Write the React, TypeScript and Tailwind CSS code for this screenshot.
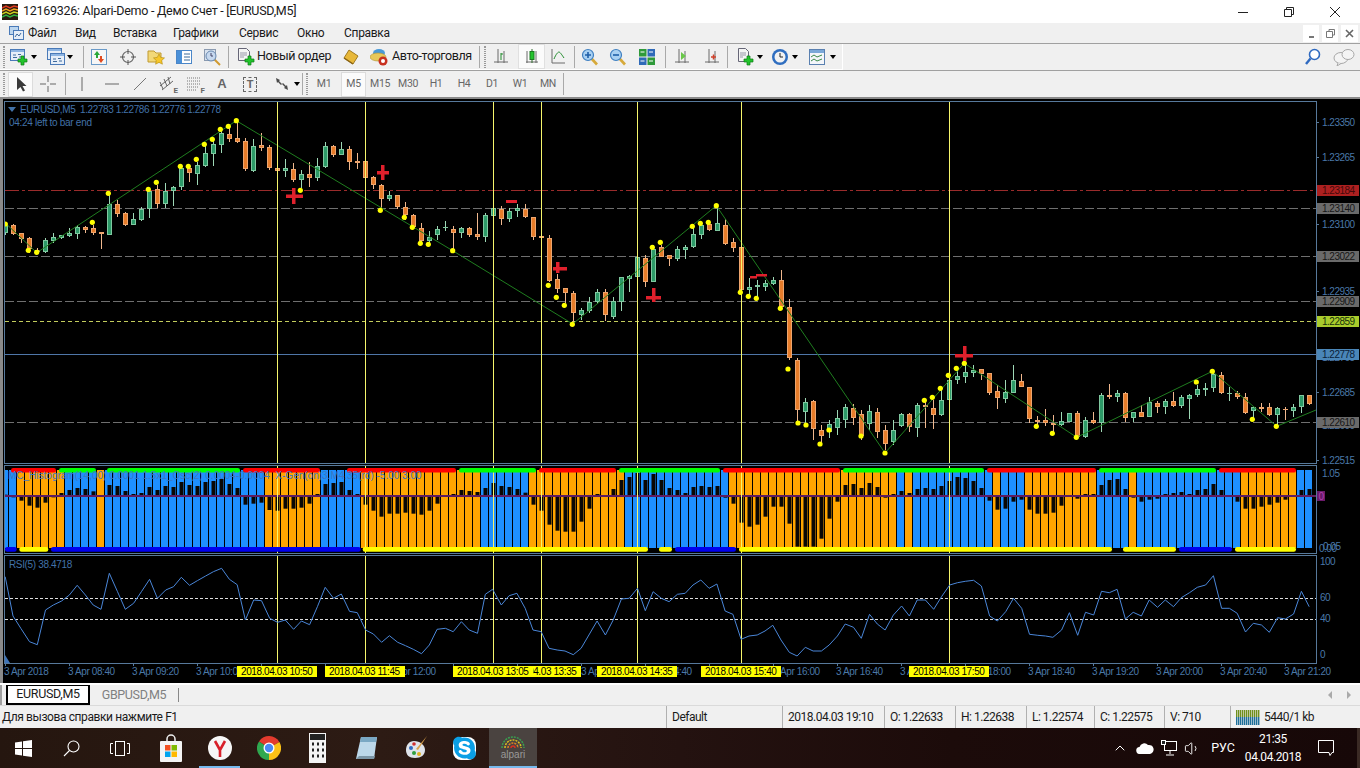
import React from "react";
import { ChevronUp, Volume1 } from "lucide-react";
import { FaSkype } from "react-icons/fa";

type Pt = [number, number];

// ---------- chart data, read off the picture (values are in 3x crop coordinates) ----------
const scale3 = (pts: Pt[], ox: number, oy: number): Pt[] => pts.map(([x, y]) => [ox + x / 3, oy + y / 3]);
const parsePairs = (s: string) => s.trim().split(/\s+/).map((p) => p.split(",").map(Number) as Pt);

const candlesA = [
  [372,375,400,405,1],[372,376,402,404,0],[398,400,416,430,0],[412,414,446,458,0],[445,450,455,462,0],[415,420,456,460,1],
  [400,412,424,428,1],[404,406,414,416,1],[385,398,408,410,1],[376,380,402,418,1],[378,382,390,398,0],[375,384,400,405,0],
  [397,397,402,446,0],[285,312,404,404,1],[300,312,342,352,0],[335,340,375,378,0],[340,358,374,375,1],[320,327,360,362,1],
  [265,272,328,355,1],[255,268,312,325,0],[250,274,312,325,1],[258,260,274,318,1],[200,205,262,270,1],[198,205,218,246,0],
  [185,196,222,255,1],[130,160,198,202,1],[120,133,162,198,1],[90,100,134,158,1],[80,103,116,125,0],[65,115,126,128,0],
  [115,124,208,212,0],[118,138,212,215,1],[98,135,144,152,0],[135,140,204,210,0],[203,203,212,212,0],[178,205,212,230,1],
  [188,208,240,246,0],[210,223,240,265,1],[185,223,234,262,0],[175,199,234,242,1],[127,139,202,205,1],[135,139,164,172,0],
  [127,148,164,166,1],[138,148,185,210,0],[160,184,188,208,0],[183,184,233,235,0],[228,232,254,266,0],[252,254,296,325,0],
  [274,286,298,304,1],[284,286,320,328,0],[305,320,346,360,0],[342,346,382,386,0],[370,385,422,430,0],[392,412,422,428,1],
  [378,388,406,420,1],[363,380,381,392,1],
  // k56..98
  [378,388,398,450,0],[382,385,398,414,1],[380,384,404,410,0],[340,403,410,420,0],[338,346,410,425,1],[322,325,347,349,1],
  [318,326,356,375,0],[325,334,356,365,1],[312,325,334,350,1],[312,326,352,354,0],[350,352,410,420,0],[409,409,415,416,0],
  [406,415,542,545,0],[523,538,566,580,0],[565,565,580,610,0],[574,580,640,665,0],[625,630,644,660,1],[590,606,632,640,1],
  [568,576,606,612,1],[568,576,646,662,0],[592,604,650,658,1],[530,532,606,632,1],[525,529,536,575,1],[470,472,530,532,1],
  [466,474,545,562,0],[436,446,545,546,1],[436,442,470,472,0],[466,466,478,498,0],[438,447,476,482,1],[436,442,450,476,1],
  [382,403,442,444,1],[368,375,406,416,1],[362,373,390,392,0],[320,369,392,392,1],[358,374,432,434,0],[415,427,443,456,0],
  [440,441,570,572,0],[535,562,569,590,1],[540,556,558,592,1],[540,550,560,572,1],[530,541,551,556,1],[510,541,620,622,0],
  [598,622,774,780,0],
];
// k99..111 in page pixels
const candlesGap = [
  [358,360,410,422,0],[398,402,412,425,1],[400,401,429,440,0],[425,430,436,445,0],[420,424,432,438,1],[410,418,428,435,1],
  [404,407,420,428,1],[404,408,418,425,0],[410,414,436,440,0],[405,411,424,430,1],[408,412,432,438,0],[425,430,444,450,0],
  [420,430,442,445,1],
];
// k112..163
const candlesB = [
  [730,733,768,770,1],[728,733,772,785,0],[700,706,775,802,1],[695,706,710,775,0],[690,715,734,776,0],[655,691,735,738,1],
  [628,630,690,692,1],[600,618,630,642,1],[582,607,622,638,1],[585,600,608,620,1],[596,598,612,630,0],[608,610,668,675,0],
  [645,664,684,716,0],[630,666,686,698,1],[585,630,668,670,1],[612,633,650,652,0],[650,652,746,760,0],[738,750,756,768,0],
  [716,750,760,768,0],[735,759,764,790,0],[726,754,764,768,1],[728,730,756,756,1],[722,729,800,802,0],[742,750,802,804,1],
  [726,750,758,762,0],[668,676,760,785,1],[642,676,680,688,0],[660,670,680,696,1],[666,669,745,755,0],[725,727,745,755,1],
  [706,727,740,742,0],[682,697,740,742,1],[694,698,712,730,0],[686,694,710,732,1],[666,694,708,712,0],[675,681,708,714,1],
  [672,676,686,746,1],[645,658,676,680,1],[640,653,660,678,1],[600,612,654,665,1],[605,616,668,672,0],[650,668,669,692,1],
  [664,668,680,686,0],[670,680,730,732,0],[708,712,724,744,1],[698,711,714,726,0],[700,712,735,738,0],[712,715,734,770,1],
  [712,716,720,750,0],[702,711,722,742,1],[675,676,712,730,1],[674,676,702,704,0],
];
const candles = [
  ...candlesA.map((r) => [100 + r[0] / 3, 100 + r[1] / 3, 100 + r[2] / 3, 100 + r[3] / 3, r[4]]),
  ...candlesGap,
  ...candlesB.map((r) => [170 + r[0] / 3, 170 + r[1] / 3, 170 + r[2] / 3, 170 + r[3] / 3, r[4]]),
];

const dots: Pt[] = [
  ...scale3([[16,372],[85,451],[110,457],[325,280],[277,367],[445,268],[469,247],[541,199],[565,199],[589,178],[613,133],[637,118],[661,88],[685,79],[709,62],[901,271],[1141,331],[1213,352],[1237,382],[1261,430],[1285,433]], 0, 100),
  ...scale3([[8,452],[295,556],[319,592],[343,616],[367,673],[607,442],[631,427],[727,379],[751,370],[775,367],[799,317],[871,577],[895,589],[919,595],[991,625]], 450, 100),
  [788,369],[798,423],[806,425],[820,444],[829,430],[861,436],[885,453],
  ...scale3([[73,691],[97,682],[121,655],[145,616],[169,595],[193,580],[409,769],[457,790],[529,802],[889,636],[937,604],[1057,748],[1129,769]], 900, 170),
];

const zigzag = "5.3,223 36.7,252.7 236.3,120.7 452.7,250.7 572.7,324 716.3,205.7 885,453 964.3,363.3 1076.7,437.3 1212.3,371.3 1276.7,426.3 1316,410";
const yellowLines = [277, 365, 493, 541, 637, 741, 949];

// [x, y, width, height] of the red marks
const redMarks = [
  [286,194.5,17,3.5],[292,188,3.5,16],[377,171,12,3.5],[381,165,3.5,15],[506,200,11,3],[553,267,14,3.5],[556,262,3.5,11],
  [646,296,15,3.5],[652,288,3.5,14],[750,276,7,2.5],[756,274,11,2.5],[955,354,18,3.5],[963,346,3.5,15],
];

const histA = [104,112,122,137,143,128,112,99,90,84,87,94,107,75,78,93,102,99,81,90,78,81,66,75,78,66,63,57,72,84,134,131,128,150,152,146,146,143,131,102,72,69,66,90,102,134,152,170,161,161,158,161,164,152,131,107];
const histB = [102,90,93,96,84,69,78,81,87,98,134,152,194,212,215,215,185,146,102,107,87,60,51,39,60,42,60,84,90,99,81,78,81,78,113,131,188,200,194,170,140,140,191,260,260,260,236,176,125,75,72,84,69,81,113,102];
const histC = [93,99,87,84,87,78,63,51,54,63,84,122,149,146,125,119,149,161,161,158,137,107,116,102,102,75,60,57,87,113,125,119,116,102,99,96,102,90,87,72,90,107,125,146,146,140,134,128,119,107,90,87];
const histValues = [...histA, ...histB, ...histC];

// colour runs of the histogram background: [first bar, last bar]
const orangeRuns = [[2,7],[12,12],[33,39],[45,59],[66,77],[91,111],[113,113],[124,124],[128,136],[141,141],[155,161]];
const isOrange = (k: number) => orangeRuns.some(([a, b]) => k >= a && k <= b);

const topBars: [number, number, string][] = [
  [11,56,"#ff0000"],[59,96,"#00ff00"],[107,240,"#00ff00"],[243,320,"#ff0000"],[347,456,"#ff0000"],[459,536,"#00ff00"],[539,616,"#ff0000"],
  [619,720,"#00ff00"],[723,840,"#ff0000"],[843,984,"#00ff00"],[987,1096,"#ff0000"],[1099,1216,"#00ff00"],[1219,1296,"#ff0000"],
];
const bottomBars: [number, number, string][] = [
  [5,16.7,"#0000ee"],[19.3,48.3,"#ffff00"],[51,360.7,"#0000ee"],[362.7,648,"#ffff00"],[659,672,"#ffff00"],[675,736,"#0000ee"],
  [739,1112,"#ffff00"],[1123,1176,"#ffff00"],[1179,1232,"#0000ee"],[1235,1296,"#ffff00"],
];

const rsiLeft = parsePairs(`12,80 30,198 48,235 68,275 86,284 105,180 123,165 142,153 160,135 178,106 197,135 215,165 233,178 252,70 271,125 289,178 308,160 326,125 345,88 363,145 382,120 400,110 418,82 437,106 455,92 474,78 492,65 511,55 529,88 547,104 566,210 585,150 603,152 622,205 640,217 658,210 677,238 695,213 714,224 732,170 750,112 769,145 787,132 806,184 824,188 843,240 861,252 880,277 898,257 917,277 935,287 953,298 972,311 990,285 1008,238 1027,235 1045,245 1064,215 1082,240 1101,250 1119,133 1136,118 1156,165 1174,137 1192,130 1211,175 1229,240 1248,245 1266,295 1285,300 1303,303 1322,314 1340,295 1358,255 1377,213 1396,255 1414,210 1433,147 1451,145 1470,115 1488,182 1506,125 1525,145 1543,155 1562,133`);
const rsiRight = parsePairs(`12,130 30,105 48,90 67,115 85,102 104,183 122,193 141,268 159,258 178,255 196,243 214,226 233,270 252,307 270,318 289,292 307,303 326,303 344,285 363,258 381,222 400,232 418,265 437,193 455,222 473,240 492,195 511,168 529,198 547,150 566,150 585,178 603,140 622,105 640,98 658,94 677,91 695,108 714,198 732,213 751,185 769,145 788,175 806,253 825,256 843,258 860,262 880,240 898,188 917,256 935,187 954,195 972,124 990,128 1008,118 1027,207 1045,187 1064,198 1082,150 1101,172 1119,150 1138,170 1156,143 1175,128 1193,112 1212,105 1230,77 1249,175 1267,175 1285,190 1304,246 1322,220 1341,225 1359,247 1378,203 1396,207 1415,192 1433,124 1451,170`);
const rsiLine = [
  ...rsiLeft.map(([x, y]) => `${(x / 2.306).toFixed(1)},${(550 + y / 3).toFixed(1)}`),
  ...rsiRight.map(([x, y]) => `${(680 + x / 2.306).toFixed(1)},${(550 + y / 3).toFixed(1)}`),
].join(" ");

const barX = (k: number) => 5 + 8 * k;

// ---------- chart panes ----------
function YellowLines({ y1, y2 }: { y1: number; y2: number }) {
  return (
    <>
      {yellowLines.map((x) => (
        <line key={x} x1={x + 0.5} x2={x + 0.5} y1={y1} y2={y2} stroke="#f6f56c" strokeWidth="1" />
      ))}
    </>
  );
}

function PricePlot() {
  return (
    <svg className="block h-[361px] w-[1311px]" viewBox="5 102 1311 361">
      <line x1="5" x2="1316" y1="190.5" y2="190.5" stroke="#9a2b2b" strokeDasharray="14 3 3 3" />
      <line x1="5" x2="1316" y1="208.5" y2="208.5" stroke="#6f6f6f" strokeDasharray="9 3" />
      <line x1="5" x2="1316" y1="256.5" y2="256.5" stroke="#6f6f6f" strokeDasharray="9 3" />
      <line x1="5" x2="1316" y1="301.5" y2="301.5" stroke="#6f6f6f" strokeDasharray="9 3" />
      <line x1="5" x2="1316" y1="321.5" y2="321.5" stroke="#c2cc5c" strokeDasharray="4 3" />
      <line x1="5" x2="1316" y1="354.5" y2="354.5" stroke="#4f76a8" />
      <line x1="5" x2="1316" y1="422.5" y2="422.5" stroke="#6f6f6f" strokeDasharray="9 3" />
      {candles.map((c, k) => {
        const green = c[4] === 1;
        const x = barX(k);
        return (
          <g key={k} shapeRendering="crispEdges">
            <rect x={x} y={c[0]} width="1" height={Math.max(c[3] - c[0], 1)} fill={green ? "#9ed8b6" : "#f0b88e"} />
            <rect
              x={x - 1.5}
              y={c[1] + 0.5}
              width="4"
              height={Math.max(c[2] - c[1] - 1, 0.5)}
              fill={green ? "#2d9a68" : "#e67c2a"}
              stroke={green ? "#80c8a0" : "#eda56e"}
              strokeWidth="1"
            />
          </g>
        );
      })}
      <polyline points={zigzag} fill="none" stroke="#1f7d1f" strokeWidth="1" />
      <YellowLines y1={102} y2={463} />
      {dots.map(([x, y], i) => (
        <circle key={i} cx={x} cy={y} r="2.6" fill="#ffff00" />
      ))}
      {redMarks.map(([x, y, w, h], i) => (
        <rect key={i} x={x} y={y} width={w} height={h} fill="#e0202c" />
      ))}
    </svg>
  );
}

function HistPlot() {
  return (
    <svg className="block h-[87px] w-[1311px]" viewBox="5 466 1311 87">
      {histValues.map((_, k) => (
        <rect key={k} x={1 + 8 * k} y="470" width="7" height="78" fill={isOrange(k) ? "#ffa500" : "#1e90ff"} shapeRendering="crispEdges" />
      ))}
      {histValues.map((v, k) => {
        const y1 = 460 + Math.min(v, 107) / 3;
        const y2 = 460 + Math.max(v, 107) / 3;
        return <rect key={k} x={3.5 + 8 * k} y={y1} width="4" height={y2 - y1} fill="#0a0805" />;
      })}
      <rect x="5" y="495" width="1311" height="2" fill="#5e1c62" />
      <YellowLines y1={466} y2={553} />
      {topBars.map(([a, b, c]) => (
        <rect key={a} x={a} y="468" width={b - a} height="4.6" rx="2.2" fill={c} />
      ))}
      {bottomBars.map(([a, b, c]) => (
        <rect key={a} x={a} y="547" width={b - a} height="4.8" rx="2.2" fill={c} />
      ))}
    </svg>
  );
}

function RsiPlot() {
  return (
    <svg className="block h-[107px] w-[1311px]" viewBox="5 556 1311 107">
      <line x1="5" x2="1316" y1="598.5" y2="598.5" stroke="#dddddd" strokeDasharray="3 2" />
      <line x1="5" x2="1316" y1="619.5" y2="619.5" stroke="#dddddd" strokeDasharray="3 2" />
      <YellowLines y1={556} y2={663} />
      <polyline points={rsiLine} fill="none" stroke="#4a86d8" strokeWidth="1" />
      <path d="M5 655 L5 663 L10 663 Z" fill="#3f74b8" />
    </svg>
  );
}

const prices: [string, number][] = [
  ["1.23350",122],["1.23265",157],["1.23100",224.5],["1.23015",258],["1.22935",291.7],["1.22850",323],["1.22765",357],["1.22685",392.5],["1.22600",425],["1.22515",460],
];
const priceTags: [string, number, string, string][] = [
  ["1.23184",190,"bg-[#ad2020]","text-[#43090a]"],
  ["1.23140",208,"bg-[#6a6a6a]","text-[#161616]"],
  ["1.23022",256,"bg-[#6a6a6a]","text-[#161616]"],
  ["1.22909",301,"bg-[#6a6a6a]","text-[#161616]"],
  ["1.22859",321,"bg-[#a9cc2c]","text-[#17300a]"],
  ["1.22778",354,"bg-[#4a86b8]","text-[#0b1e38]"],
  ["1.22610",422,"bg-[#6a6a6a]","text-[#161616]"],
];

function PriceRail() {
  return (
    <div className="relative flex-1">
      {prices.map(([t, y]) => (
        <div key={t} className="absolute left-0 flex h-[11px] items-center" style={{ top: y - 101 - 5.5 }}>
          <span className="h-px w-[2px] bg-[#57799b]" />
          <span className="pl-[3px] text-[10px] leading-[11px] tracking-[-0.5px] text-[#4a78a8]">{t}</span>
        </div>
      ))}
      {priceTags.map(([t, y, bg, fg]) => (
        <div key={t} className={`absolute left-0 h-[11px] w-[42px] pl-[5px] text-[10px] leading-[11px] tracking-[-0.5px] ${bg} ${fg}`} style={{ top: y - 101 - 5.5 }}>
          {t}
        </div>
      ))}
    </div>
  );
}

function HistRail() {
  return (
    <div className="relative flex-1 text-[10px] leading-[11px] tracking-[-0.5px] text-[#4a78a8]">
      <span className="absolute left-[5px] top-[3px]">1.05</span>
      <span className="absolute left-0 top-[26px] flex h-[10px] w-[8px] justify-center bg-[#6a1a6a] text-[#b040b0]">0</span>
      <span className="absolute left-[6px] top-[76px]">0.05</span>
      <span className="absolute left-[2px] top-[78px]">0.00</span>
    </div>
  );
}

function RsiRail() {
  return (
    <div className="relative flex-1 text-[10px] leading-[11px] tracking-[-0.5px] text-[#4a78a8]">
      <span className="absolute left-[3px] top-[1px]">100</span>
      <span className="absolute left-[3px] top-[37px]">60</span>
      <span className="absolute left-[3px] top-[58px]">40</span>
      <span className="absolute left-[3px] top-[94px]">0</span>
    </div>
  );
}

const axisLabels: [string, number][] = [
  ["3 Apr 2018",4],["3 Apr 08:40",68],["3 Apr 09:20",132],["3 Apr 10:00",196],["3 Apr 12:00",389],["3 Apr 14:00",581],["3 Apr 14:40",645],
  ["3 Apr 16:00",773],["3 Apr 16:40",836],["3 Apr 17:20",900],["3 Apr 18:00",964],["3 Apr 18:40",1028],["3 Apr 19:20",1092],["3 Apr 20:00",1156],["3 Apr 20:40",1220],["3 Apr 21:20",1284],
];
const axisTicks = [5,69,133,197,261,325,389,453,517,581,645,709,773,837,901,965,1029,1093,1157,1221,1285];
// later flags are painted first, so 13:05 lies over 13:35 as in the terminal
const axisFlags: [string, number, number][] = [
  ["2018.04.03 10:50",237,80],["2018.04.03 11:45",325,80],["2018.04.03 13:35",501,80],["2018.04.03 13:05",453,80],["2018.04.03 14:35",597,80],["2018.04.03 15:40",701,80],["2018.04.03 17:50",909,80],
];

function TimeAxis() {
  return (
    <div className="relative h-[19px] text-[10px] leading-[11px] tracking-[-0.4px] text-[#4a78a8]">
      {axisTicks.map((x) => (
        <span key={x} className="absolute top-0 h-[2px] w-px bg-[#57799b]" style={{ left: x - 4 }} />
      ))}
      {axisLabels.map(([t, x]) => (
        <span key={t} className="absolute top-[2px] whitespace-nowrap" style={{ left: x - 4 }}>{t}</span>
      ))}
      {axisFlags.map(([t, x, w]) => (
        <span key={t} className="absolute top-[2px] h-[11px] bg-[#ffff00] pl-[4px] whitespace-nowrap text-black" style={{ left: x - 4, width: w }}>{t}</span>
      ))}
    </div>
  );
}

function ChartWindow() {
  return (
    <div className="h-[586px] shrink-0 border-t-2 border-l-[3px] border-[#8a8a8a] bg-black pt-[2px] pl-px font-['Liberation_Sans',sans-serif]">
      <div className="flex h-[363px]">
        <div className="relative h-[363px] w-[1313px] shrink-0 border border-[#57799b]">
          <PricePlot />
          <div className="absolute top-[1px] left-[3px] flex items-center gap-[4px] text-[10px] leading-[13px] tracking-[-0.4px] whitespace-pre text-[#4272a8]">
            <span className="h-0 w-0 border-x-[4px] border-t-[5px] border-x-transparent border-t-[#4272a8]" />
            <span>EURUSD,M5  1.22783 1.22786 1.22776 1.22778</span>
          </div>
          <div className="absolute top-[14px] left-[4px] text-[10px] leading-[13px] tracking-[-0.3px] text-[#4272a8]">04:24 left to bar end</div>
        </div>
        <PriceRail />
      </div>
      <div className="mt-px flex h-[89px]">
        <div className="relative h-[89px] w-[1313px] shrink-0 border border-[#57799b]">
          <HistPlot />
          <div className="absolute top-[4px] left-[3px] text-[10px] leading-[12px] whitespace-pre text-[#3f76c0]">
            MC_Histogram(14,00) 0.0001 1.5x1_Osc(2) 0.0004-0.0004  X-Gen(on)3.M4.35(rd) -5.00 3.00
          </div>
        </div>
        <HistRail />
      </div>
      <div className="mt-px flex h-[109px]">
        <div className="relative h-[109px] w-[1313px] shrink-0 border border-[#57799b]">
          <RsiPlot />
          <div className="absolute top-[2px] left-[4px] text-[10px] leading-[13px] tracking-[-0.35px] text-[#4272a8]">RSI(5) 38.4718</div>
        </div>
        <RsiRail />
      </div>
      <TimeAxis />
    </div>
  );
}

// ---------- small drawn icons ----------
function Caret() {
  return <span className="h-0 w-0 border-x-[3px] border-t-[4px] border-x-transparent border-t-black" />;
}
function Sep() {
  return <span className="h-[22px] w-px shrink-0 bg-[#a9a9a9]" />;
}
function Grip() {
  return <span className="h-[22px] w-[2px] shrink-0 border-x border-dotted border-[#9a9a9a]" />;
}
function GreenPlus({ x, y }: { x: number; y: number }) {
  return <path transform={`translate(${x} ${y})`} d="M3 0h3v3h3v3h-3v3h-3v-3h-3v-3h3z" fill="#22c32c" stroke="#0d7d16" strokeWidth="0.7" />;
}
function Window({ x = 0, y = 0 }: { x?: number; y?: number }) {
  return (
    <g transform={`translate(${x} ${y})`}>
      <rect x="0.5" y="0.5" width="14" height="11" fill="#e6eef8" stroke="#4a7ab8" />
      <rect x="1" y="1" width="13" height="2" fill="#8db4e2" />
      <path d="M3 6h3M3 8.500h4M8 5.500h3M9 8h3" stroke="#3f6a9c" fill="none" />
    </g>
  );
}
function Ico({ children, w = 18 }: { children: React.ReactNode; w?: number }) {
  return (
    <svg width={w} height="18" viewBox={`0 0 ${w} 18`} className="shrink-0">
      {children}
    </svg>
  );
}
function Magnifier({ sign }: { sign: "+" | "-" }) {
  return (
    <Ico>
      <line x1="10" y1="10" x2="16" y2="16.500" stroke="#d6a93a" strokeWidth="2.6" />
      <circle cx="7" cy="7" r="5.500" fill="#a8d0f2" stroke="#3f7fc0" strokeWidth="1.2" />
      <path d={sign === "+" ? "M4 7h6M7 4v6" : "M4 7h6"} stroke="#1f5fa8" strokeWidth="1.6" />
    </Ico>
  );
}
function AxisIcon({ children }: { children?: React.ReactNode }) {
  return (
    <Ico>
      <path d="M5 1v14M1 14h14" stroke="#6a6a6a" fill="none" />
      <path d="M11 3v12" stroke="#6a6a6a" fill="none" />
      {children}
    </Ico>
  );
}

// ---------- the application ----------
function TitleBar() {
  return (
    <div className="flex h-[23px] shrink-0 items-center bg-white pl-[2px] text-[12.5px] text-[#1a1a1a]">
      <svg width="16" height="16" viewBox="0 0 16 16" className="shrink-0">
        <rect width="16" height="16" fill="#2a1a10" />
        <path d="M0 4l4-2 4 2 4-2 4 1" stroke="#e03a20" strokeWidth="1.5" fill="none" />
        <path d="M0 7l4-2 4 2 4-2 4 1" stroke="#f0a020" strokeWidth="1.5" fill="none" />
        <path d="M0 10l4-2 4 2 4-2 4 1" stroke="#c8d020" strokeWidth="1.5" fill="none" />
        <path d="M0 13l4-2 4 2 4-2 4 1" stroke="#30b040" strokeWidth="1.5" fill="none" />
      </svg>
      <span className="ml-[5px] tracking-[-0.28px]">12169326: Alpari-Demo - Демо Счет - [EURUSD,M5]</span>
      <div className="ml-auto flex h-full items-center pr-[2px]">
        <span className="flex w-[46px] justify-center">
          <svg width="10" height="10" viewBox="0 0 10 10"><path d="M0 5.500h10" stroke="#222" /></svg>
        </span>
        <span className="flex w-[46px] justify-center">
          <svg width="10" height="10" viewBox="0 0 10 10"><path d="M2.500 2.500V.5h7v7h-2M.5 2.500h7v7h-7z" stroke="#222" fill="none" /></svg>
        </span>
        <span className="flex w-[46px] justify-center">
          <svg width="12" height="12" viewBox="0 0 12 12"><path d="M1 1l10 10M11 1L1 11" stroke="#222" /></svg>
        </span>
      </div>
    </div>
  );
}

function MenuBar() {
  return (
    <div className="flex h-[20px] shrink-0 items-center bg-[#f0f0f0] text-[12px] tracking-[-0.3px] text-[#1a1a1a]">
      <span className="flex w-[28px] justify-center pl-[4px]">
        <svg width="15" height="14" viewBox="0 0 15 14">
          <rect x="0.500" y="0.500" width="9" height="8" fill="#bcd6ef" stroke="#4a7ab8" />
          <rect x="4.500" y="4.500" width="10" height="9" fill="#e6eef8" stroke="#4a7ab8" />
          <path d="M6 11l2-3 2 2 2-3" stroke="#3f6a9c" fill="none" />
        </svg>
      </span>
      <span className="w-[47px]">Файл</span>
      <span className="w-[38px]">Вид</span>
      <span className="w-[60px]">Вставка</span>
      <span className="w-[66px]">Графики</span>
      <span className="w-[58px]">Сервис</span>
      <span className="w-[47px]">Окно</span>
      <span>Справка</span>
      <div className="ml-auto flex items-center gap-[3px] pr-[2px]">
        <span className="flex h-[17px] w-[16px] items-end justify-center bg-white pb-[4px]"><span className="h-[2px] w-[5px] bg-[#777]" /></span>
        <span className="flex h-[17px] w-[16px] items-center justify-center bg-white">
          <svg width="9" height="9" viewBox="0 0 9 9"><path d="M3 2V.5h5.500V6H7M.5 2.500h6v6h-6z" stroke="#777" fill="none" /></svg>
        </span>
        <span className="flex h-[17px] w-[17px] items-center justify-center bg-white">
          <svg width="9" height="9" viewBox="0 0 9 9"><path d="M1 1l7 7M8 1L1 8" stroke="#666" strokeWidth="1.600" /></svg>
        </span>
      </div>
    </div>
  );
}

function ToolbarOne() {
  return (
    <div className="flex h-[27px] shrink-0 border-t border-[#a0a0a0] bg-[#f0f0f0] text-[12.5px] tracking-[-0.4px] text-[#1a1a1a]">
      <div className="flex w-[843px] items-center border-r border-b border-white pl-[3px]">
        <Grip />
        <span className="flex w-[37px] items-center justify-center gap-[3px]">
          <Ico><Window y={1} /><GreenPlus x={8} y={8} /></Ico><Caret />
        </span>
        <span className="flex w-[36px] items-center justify-center gap-[2px]">
          <Ico><Window y={0} /><Window x={3} y={5} /></Ico><Caret />
        </span>
        <span className="w-[5px]" />
        <Sep />
        <span className="flex w-[30px] justify-center">
          <Ico>
            <rect x="1.500" y="1.500" width="15" height="15" fill="#f6f6f6" stroke="#6a9ac8" />
            <path d="M7 3L4 7h2v3h2V7h2z" fill="#2aa838" />
            <path d="M11 15l3-4h-2V8h-2v3H8z" fill="#e04a20" />
          </Ico>
        </span>
        <span className="flex w-[28px] justify-center">
          <Ico>
            <circle cx="9" cy="9" r="5.500" fill="none" stroke="#666" strokeWidth="1.200" />
            <path d="M9 1v5M9 12v5M1 9h5M12 9h5" stroke="#555" />
          </Ico>
        </span>
        <span className="flex w-[28px] justify-center">
          <Ico>
            <path d="M1 3h6l2 2h5v9H1z" fill="#f2d878" stroke="#c09a30" />
            <path d="M12 6l1.700 3.400 3.800.5-2.800 2.600.7 3.700-3.400-1.800-3.400 1.800.7-3.700-2.800-2.600 3.800-.5z" fill="#f6c62a" stroke="#b08a10" strokeWidth="0.600" />
          </Ico>
        </span>
        <span className="flex w-[28px] justify-center">
          <Ico>
            <rect x="1.500" y="2.500" width="15" height="13" fill="#fff" stroke="#4a86c8" />
            <rect x="2" y="3" width="5" height="12" fill="#4a90d8" />
            <path d="M9 6h6M9 9h6M9 12h6" stroke="#3a6a9a" />
          </Ico>
        </span>
        <span className="flex w-[28px] justify-center">
          <Ico>
            <rect x="1.500" y="1.500" width="11" height="11" fill="#d8e2ee" stroke="#8a9ab0" />
            <circle cx="8" cy="8" r="5" fill="#c6d8ee" stroke="#6a8ab0" />
            <path d="M8 5v3h2" stroke="#446" fill="none" />
            <line x1="12" y1="12" x2="17" y2="17" stroke="#d09a30" strokeWidth="2" />
          </Ico>
        </span>
        <span className="w-[2px]" />
        <Sep />
        <span className="flex w-[105px] items-center pl-[8px]">
          <Ico>
            <path d="M1.500.5h8l3 3v9h-11z" fill="#f4f4f4" stroke="#667" />
            <path d="M3 5h7M3 7h7M3 9h4" stroke="#99a" />
            <GreenPlus x={8} y={8} />
          </Ico>
          <span className="ml-[2px] whitespace-nowrap">Новый ордер</span>
        </span>
        <span className="flex w-[34px] justify-center">
          <Ico>
            <path d="M7 2l9 6-5 8-9-6z" fill="#e8b83a" stroke="#a07a20" />
            <path d="M2 10l9 6" stroke="#8a6414" strokeWidth="1.500" />
          </Ico>
        </span>
        <span className="flex w-[111px] items-center pl-[2px]">
          <Ico>
            <ellipse cx="9" cy="5" rx="6" ry="4" fill="#4a9ad8" />
            <ellipse cx="8" cy="9" rx="8" ry="4" fill="#e8c85a" stroke="#b09030" strokeWidth="0.600" />
            <circle cx="13" cy="13" r="4.500" fill="#c83020" />
            <circle cx="13" cy="13" r="2" fill="#fff" />
          </Ico>
          <span className="ml-[4px] whitespace-nowrap">Авто-торговля</span>
        </span>
        <Sep />
        <span className="w-[4px]" />
        <Grip />
        <span className="flex w-[32px] justify-center">
          <AxisIcon><path d="M8 5v7M8 6h2" stroke="#1f8a2a" fill="none" /></AxisIcon>
        </span>
        <span className="flex h-[25px] w-[27px] items-center justify-center border border-[#e0e0e0] bg-[#fbfbfb]">
          <Ico>
            <path d="M3 14h12M4 3v12M13 3v12" stroke="#6a6a6a" fill="none" />
            <path d="M9 1v14" stroke="#2f6a2a" />
            <rect x="7" y="3.500" width="4" height="8" fill="#22c32c" stroke="#1a7a20" />
          </Ico>
        </span>
        <span className="flex w-[26px] justify-center">
          <Ico><path d="M3 1v14h13" stroke="#6a6a6a" fill="none" /><path d="M5 11c2-5 4-7 5-7s3 3 5 6" stroke="#1f8a2a" fill="none" /></Ico>
        </span>
        <span className="w-[3px]" />
        <Sep />
        <span className="flex w-[29px] justify-center"><Magnifier sign="+" /></span>
        <span className="flex w-[28px] justify-center"><Magnifier sign="-" /></span>
        <span className="flex w-[30px] justify-center">
          <Ico>
            <rect x="1" y="1" width="7.500" height="7.500" fill="#2f9a3a" /><rect x="9.500" y="1" width="7.500" height="7.500" fill="#2f6ab8" />
            <rect x="1" y="9.500" width="7.500" height="7.500" fill="#2f6ab8" /><rect x="9.500" y="9.500" width="7.500" height="7.500" fill="#2f9a3a" />
            <path d="M2.500 4h4M11 4h4M2.500 13h4M11 13h4" stroke="#fff" />
          </Ico>
        </span>
        <span className="w-[3px]" />
        <Sep />
        <span className="flex w-[33px] justify-center"><AxisIcon><path d="M7 4l5 4-5 4z" fill="#6ac84a" /></AxisIcon></span>
        <span className="flex w-[28px] justify-center"><AxisIcon><path d="M7 9h5M9.500 6.500v5" stroke="#d0402a" strokeWidth="1.500" /></AxisIcon></span>
        <Sep />
        <span className="flex w-[38px] items-center justify-center gap-[3px] pl-[5px]">
          <Ico>
            <path d="M2.500.5h7l3 3v10h-10z" fill="#f4f4f4" stroke="#667" />
            <path d="M4 5h6M4 7h6M4 9h3" stroke="#99a" />
            <GreenPlus x={8} y={8} />
          </Ico>
          <Caret />
        </span>
        <span className="flex w-[37px] items-center justify-center gap-[3px]">
          <Ico>
            <circle cx="9" cy="9" r="8" fill="#2f6ec0" />
            <circle cx="9" cy="9" r="5.500" fill="#f2f2f2" />
            <path d="M9 5v4h3" stroke="#222" fill="none" />
          </Ico>
          <Caret />
        </span>
        <span className="flex w-[38px] items-center justify-center gap-[4px]">
          <Ico>
            <rect x="1.500" y="1.500" width="15" height="15" fill="#f4f6fa" stroke="#5a80b0" />
            <rect x="2" y="2" width="14" height="3" fill="#7aa8d8" />
            <path d="M3 9l3-2 3 2 5-2M3 13l3-2 3 2 5-2" stroke="#3a8a4a" fill="none" />
          </Ico>
          <Caret />
        </span>
      </div>
      <div className="ml-auto flex items-center gap-[12px] pr-[5px]">
        <svg width="17" height="18" viewBox="0 0 17 18">
          <circle cx="10.500" cy="6.500" r="5" fill="#fff" stroke="#2f6ac0" strokeWidth="1.600" />
          <line x1="6.500" y1="10.500" x2="2" y2="16" stroke="#2f6ac0" strokeWidth="2.400" />
        </svg>
        <svg width="22" height="18" viewBox="0 0 22 18">
          <ellipse cx="8" cy="10" rx="7" ry="5.500" fill="#f4f4f4" stroke="#a8a8a8" />
          <ellipse cx="15" cy="6.500" rx="6" ry="5" fill="#f4f4f4" stroke="#a8a8a8" />
          <path d="M5 15l-1 3 4-2.500" fill="#f4f4f4" stroke="#a8a8a8" />
        </svg>
      </div>
    </div>
  );
}

const periods = ["M1", "M5", "M15", "M30", "H1", "H4", "D1", "W1", "MN"];

function ToolbarTwo() {
  return (
    <div className="flex h-[27px] shrink-0 items-center border-t border-[#a0a0a0] bg-[#f0f0f0] pl-[3px] text-[#666]">
      <Grip />
      <span className="ml-[3px] flex h-[25px] w-[25px] items-center justify-center border border-[#dcdcdc] bg-[#fbfbfb]">
        <svg width="14" height="16" viewBox="0 0 14 16"><path d="M3 1v13l3.500-3 2.500 4.500 2-1-2.500-4.500h4z" fill="#3a3a3a" /></svg>
      </span>
      <span className="flex w-[30px] justify-center">
        <Ico><path d="M9 1v6M9 11v6M1 9h6M11 9h6" stroke="#666" /></Ico>
      </span>
      <span className="w-[2px]" />
      <Sep />
      <span className="flex w-[32px] justify-center"><Ico><path d="M9 2v14" stroke="#666" /></Ico></span>
      <span className="flex w-[28px] justify-center"><Ico><path d="M2 9h14" stroke="#666" /></Ico></span>
      <span className="flex w-[28px] justify-center"><Ico><path d="M3 15L15 3" stroke="#777" /></Ico></span>
      <span className="relative flex w-[25px] justify-center">
        <Ico><path d="M2 11L13 2M4 15L15 6M2 7l3 7M6 4l3 7M10 2l2 7" stroke="#666" fill="none" /></Ico>
        <span className="absolute right-[1px] bottom-[-2px] text-[8px] leading-[9px] font-bold">E</span>
      </span>
      <span className="relative flex w-[29px] justify-center">
        <Ico><path d="M2 3h13M2 6h13M2 9h13M2 12h11M2 15h9" stroke="#777" strokeDasharray="1 1" /></Ico>
        <span className="absolute right-[3px] bottom-[-2px] text-[8px] leading-[9px] font-bold">F</span>
      </span>
      <span className="flex w-[28px] justify-center font-['Liberation_Sans',sans-serif] text-[13px] font-bold text-[#666]">A</span>
      <span className="flex w-[28px] justify-center">
        <span className="flex h-[15px] w-[14px] items-center justify-center border border-dashed border-[#666] font-['Liberation_Sans',sans-serif] text-[11px] leading-none font-bold">T</span>
      </span>
      <span className="flex w-[38px] items-center justify-center gap-[3px] pl-[6px]">
        <Ico><path d="M3 3l4 2-1 1 3 3-1 1-3-3-1 1zM15 15l-4-2 1-1-3-3 1-1 3 3 1-1z" fill="#4a4a4a" /></Ico>
        <Caret />
      </span>
      <Sep />
      <span className="w-[3px]" />
      <Grip />
      <span className="w-[2px]" />
      {periods.map((p) =>
        p === "M5" ? (
          <span key={p} className="ml-[3px] flex h-[25px] w-[25px] items-center justify-center border border-[#dcdcdc] bg-[#fbfbfb] text-[10.5px] tracking-[-0.4px]">{p}</span>
        ) : (
          <span key={p} className="flex w-[28px] justify-center text-[10.5px] tracking-[-0.4px]">{p}</span>
        ),
      )}
      <span className="w-px" />
      <Sep />
    </div>
  );
}

function TabBar() {
  return (
    <>
      <div className="h-[2px] shrink-0 bg-white" />
      <div className="flex h-[20px] shrink-0 items-stretch border-l-2 border-[#a0a0a0] bg-[#f0f0f0] text-[12.5px] tracking-[-0.35px]">
        <span className="ml-[4px] flex w-[84px] items-center justify-center border-2 border-t border-black bg-white text-[#1a1a1a]">EURUSD,M5</span>
        <span className="my-[3px] flex w-[89px] items-center justify-center border-r border-[#888] text-[#808080]">GBPUSD,M5</span>
        <div className="ml-auto flex items-center gap-[15px] pr-[9px]">
          <span className="h-0 w-0 border-y-[4px] border-r-[4px] border-y-transparent border-r-[#aaa]" />
          <span className="h-0 w-0 border-y-[4px] border-l-[4px] border-y-transparent border-l-[#aaa]" />
        </div>
      </div>
    </>
  );
}

function StatusBar() {
  const cell = "flex h-full items-center border-l border-[#b0b0b0] pl-[5px] whitespace-nowrap";
  return (
    <div className="flex h-[23px] shrink-0 items-center border-t border-[#dadada] bg-[#f0f0f0] text-[12px] tracking-[-0.5px] text-[#1a1a1a]">
      <span className="w-[666px] pl-[2px] tracking-[-0.4px] whitespace-nowrap">Для вызова справки нажмите F1</span>
      <span className={`${cell} w-[116px]`}>Default</span>
      <span className={`${cell} w-[102px]`}>2018.04.03 19:10</span>
      <span className={`${cell} w-[71px]`}>O: 1.22633</span>
      <span className={`${cell} w-[71px]`}>H: 1.22638</span>
      <span className={`${cell} w-[68px]`}>L: 1.22574</span>
      <span className={`${cell} w-[70px]`}>C: 1.22575</span>
      <span className={`${cell} w-[66px]`}>V: 710</span>
      <span className={`${cell} gap-[4px]`}>
        <svg width="24" height="15" viewBox="0 0 24 15">
          {Array.from({ length: 12 }, (_, i) => (
            <g key={i}>
              <rect x={i * 2} y={0} width="1.400" height="7" fill="#6f8f1e" />
              <rect x={i * 2} y={7} width="1.400" height="8" fill="#1f6f9a" />
            </g>
          ))}
        </svg>
        5440/1 kb
      </span>
    </div>
  );
}

function Taskbar() {
  const cell = "flex h-full w-[49px] shrink-0 items-center justify-center";
  return (
    <div className="flex h-[40px] shrink-0 items-stretch bg-[linear-gradient(90deg,#25160f_0%,#2d1b14_28%,#241210_50%,#1c0b0a_70%,#170808_100%)] text-white">
      <span className="flex w-[47px] items-center justify-center">
        <svg width="17" height="17" viewBox="0 0 17 17">
          <path d="M0 2.400l7-1v6.600H0zM8 1.200l9-1.200v8H8zM0 9h7v6.600l-7-1zM8 9h9v8l-9-1.200z" fill="#fff" />
        </svg>
      </span>
      <span className="flex w-[49px] items-center justify-center">
        <svg width="17" height="17" viewBox="0 0 17 17" fill="none" stroke="#fff" strokeWidth="1.100">
          <circle cx="10.500" cy="6.500" r="5.500" /><line x1="6.500" y1="10.500" x2="1" y2="16" />
        </svg>
      </span>
      <span className="flex w-[47px] items-center justify-center">
        <svg width="20" height="15" viewBox="0 0 20 15" fill="none" stroke="#fff" strokeWidth="1">
          <rect x="5.500" y="0.500" width="9" height="14" /><path d="M3 2.500H.5v10H3M17 2.500h2.500v10H17" />
        </svg>
      </span>
      <span className="w-[3px]" />
      <span className={cell}>
        <svg width="24" height="28" viewBox="0 0 24 28">
          <path d="M8 8V5a4 4 0 018 0v3" fill="none" stroke="#eee" strokeWidth="1.500" />
          <rect x="1" y="7" width="22" height="21" rx="1" fill="#f4f4f4" />
          <rect x="6" y="11" width="5.500" height="5.500" fill="#f25022" /><rect x="12.500" y="11" width="5.500" height="5.500" fill="#7fba00" />
          <rect x="6" y="17.500" width="5.500" height="5.500" fill="#00a4ef" /><rect x="12.500" y="17.500" width="5.500" height="5.500" fill="#ffb900" />
        </svg>
      </span>
      <span className={`${cell} relative`}>
        <svg width="24" height="24" viewBox="0 0 24 24">
          <circle cx="12" cy="12" r="12" fill="#f6f6f6" />
          <path d="M7 5l5 9 5-9M12 14v7" fill="none" stroke="#d8202a" strokeWidth="2.600" />
        </svg>
        <span className="absolute inset-x-[4px] bottom-0 h-[2px] bg-[#76b9ed]" />
      </span>
      <span className={cell}>
        <svg width="24" height="24" viewBox="0 0 24 24">
          <path d="M12 12L22.400 6A12 12 0 002 5.400z" fill="#e33b2e" />
          <path d="M12 12L2 5.400A12 12 0 0012 24z" fill="#2fa84f" />
          <path d="M12 12V24A12 12 0 0022.400 6z" fill="#fbc116" />
          <circle cx="12" cy="12" r="5.500" fill="#fff" /><circle cx="12" cy="12" r="4.200" fill="#4a8af4" />
        </svg>
      </span>
      <span className={cell}>
        <svg width="17" height="30" viewBox="0 0 17 30">
          <rect width="17" height="30" fill="#f4f4f4" />
          <rect x="1" y="1" width="15" height="6" fill="#222" />
          <path d="M3 11h2M8 11h2M13 11h2M3 17h2M8 17h2M13 17h2M3 23h2M8 23h2M13 23h2" stroke="#222" strokeWidth="3" />
        </svg>
      </span>
      <span className={cell}>
        <svg width="24" height="26" viewBox="0 0 24 26">
          <path d="M6 2h16l-3 22H1z" fill="#bcd8ea" />
          <path d="M6 2h16l-1 5H5z" fill="#7aa8c4" />
          <path d="M1 24h18l1-3H4z" fill="#7c97a8" />
        </svg>
      </span>
      <span className={cell}>
        <svg width="26" height="26" viewBox="0 0 26 26">
          <path d="M11 6c6 0 11 4 11 9s-4 8-10 8-9-3-9-8 3-9 8-9z" fill="#dfe4ea" />
          <circle cx="8" cy="13" r="2" fill="#2f6ac0" /><circle cx="11" cy="18" r="2" fill="#30a040" />
          <circle cx="16" cy="19" r="2" fill="#e0b020" /><circle cx="11" cy="9" r="1.800" fill="#d03030" />
          <path d="M24 1l-9 14-2-1z" fill="#d8a04a" />
        </svg>
      </span>
      <span className={cell}>
        <span className="flex h-[23px] w-[23px] items-center justify-center rounded-[8px] bg-white">
          <FaSkype className="h-[26px] w-[26px] text-[#0a9fe6]" />
        </span>
      </span>
      <span className="relative flex h-full w-[48px] shrink-0 flex-col items-center justify-center bg-[#4a4340]">
        <svg width="24" height="14" viewBox="0 0 24 14" fill="none">
          <path d="M1 13a11 11 0 0122 0" stroke="#38a050" strokeWidth="1.500" strokeDasharray="2 1" />
          <path d="M4 13a8 8 0 0116 0" stroke="#d8c020" strokeWidth="1.500" strokeDasharray="2 1" />
          <path d="M7 13a5 5 0 0110 0" stroke="#e08020" strokeWidth="1.500" strokeDasharray="2 1" />
          <path d="M10 13a2 2 0 014 0" stroke="#d83020" strokeWidth="1.500" />
        </svg>
        <span className="font-['Liberation_Sans',sans-serif] text-[10px] leading-[12px] text-[#9a9a9a]">alpari</span>
        <span className="absolute inset-x-0 bottom-0 h-[2px] bg-[#76b9ed]" />
      </span>
      <div className="ml-auto flex items-stretch">
        <span className="flex w-[24px] items-center justify-center"><ChevronUp size={16} strokeWidth={1.500} /></span>
        <span className="flex w-[25px] items-center justify-center">
          <svg width="18" height="12" viewBox="0 0 18 12"><path d="M4 12a3.500 3.500 0 01-.5-7A5 5 0 0112 3a4.500 4.500 0 012 9z" fill="#fff" /></svg>
        </span>
        <span className="flex w-[24px] items-center justify-center">
          <svg width="16" height="16" viewBox="0 0 16 16" fill="none" stroke="#fff"><rect x="3.500" y="1.500" width="12" height="9" /><rect x="0.500" y="0.500" width="4" height="4" fill="#222" /><path d="M9 11v3M5 15h8" /></svg>
        </span>
        <span className="flex w-[22px] items-center justify-center"><Volume1 size={17} strokeWidth={1.300} /></span>
        <span className="flex w-[40px] items-center justify-center text-[12.5px]">РУС</span>
        <span className="flex w-[60px] flex-col items-center justify-center gap-[3px] text-[12px] leading-[15px] tracking-[-0.4px]">
          <span>21:35</span>
          <span>04.04.2018</span>
        </span>
        <span className="flex w-[46px] items-center justify-center">
          <svg width="17" height="17" viewBox="0 0 17 17" fill="none" stroke="#fff"><path d="M.5.5h15v12h-1.500l-2 3-1-3H.5z" /></svg>
        </span>
        <span className="ml-[8px] w-[3px] bg-[#3a2a24]" />
      </div>
    </div>
  );
}

export default function App() {
  return (
    <div className="flex h-[768px] w-[1360px] flex-col overflow-hidden bg-[#f0f0f0] font-['Roboto',sans-serif]">
      <TitleBar />
      <MenuBar />
      <ToolbarOne />
      <ToolbarTwo />
      <ChartWindow />
      <TabBar />
      <StatusBar />
      <Taskbar />
    </div>
  );
}
